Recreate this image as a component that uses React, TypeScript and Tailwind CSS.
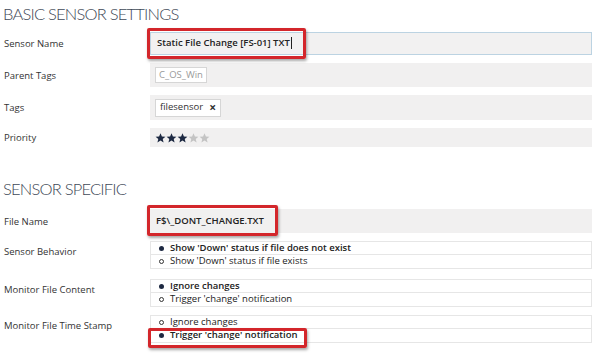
import React from "react";

const font = { fontFamily: '"Open Sans", "Liberation Sans", sans-serif' };
const headFont = { fontFamily: 'Lato, "Open Sans", sans-serif' };

function Label({ children, top }: { children: React.ReactNode; top?: boolean }) {
    return (
        <div className={"w-[150px] shrink-0 pl-[4px] text-[9.5px] leading-[13px] text-[#333] " + (top ? "pt-[4px]" : "")}>
            {children}
        </div>
    );
}

function RedBox({ className }: { className: string }) {
    return (
        <div
            className={
                "pointer-events-none absolute border-[3px] border-[#d3262b] rounded-[2px] shadow-[1px_2px_3px_rgba(0,0,0,0.35)] " +
                className
            }
        />
    );
}

function Dot({ on }: { on: boolean }) {
    return on ? (
        <span className="inline-block w-[5px] h-[5px] rounded-full bg-[#1d2942] mr-[6px]" />
    ) : (
        <span className="inline-block w-[5px] h-[5px] rounded-full border border-[#333] mr-[6px]" />
    );
}

function Option({ on, text, last }: { on: boolean; text: string; last?: boolean }) {
    return (
        <div
            className={
                "h-[13px] flex items-center pl-[8px] text-[9.5px] text-[#222] " +
                (on ? "font-semibold " : "") +
                (last ? "" : "border-b border-[#e6e6e6]")
            }
        >
            <Dot on={on} />
            {text}
        </div>
    );
}

function Star({ on }: { on: boolean }) {
    return (
        <svg width="11" height="12" viewBox="0 0 24 24">
            <path
                d="M12 1.5l3.1 7.1 7.6.6-5.8 5 1.8 7.5L12 17.7l-6.7 4 1.8-7.5-5.8-5 7.6-.6z"
                fill={on ? "#1d2942" : "#c4c4c4"}
            />
        </svg>
    );
}

export default function App() {
    return (
        <div className="w-[600px] h-[353px] bg-white overflow-hidden pr-[8px]" style={font}>
            <div
                className="h-[30px] pl-[3px] pt-[3px] text-[16.5px] font-light leading-[22px] text-[#3f4a58] tracking-[-0.8px]"
                style={headFont}
            >
                BASIC SENSOR SETTINGS
            </div>

            <div className="flex items-center h-[24px] mt-[1px]">
                <Label>Sensor Name</Label>
                <div className="relative flex-1 h-[23px] bg-[#f2f1f1] border border-[#bcd3e2] flex items-center pl-[6px] text-[9.5px] font-semibold text-[#222]">
                    Static File Change [FS-01] TXT<span className="w-px h-[12px] bg-[#222] ml-[1px]" />
                    <RedBox className="-left-[4px] -top-[5px] w-[159px] h-[31px]" />
                </div>
            </div>

            <div className="flex items-center h-[24px] mt-[8px]">
                <Label>Parent Tags</Label>
                <div className="flex-1 h-[24px] bg-[#f1f0f0] flex items-center pl-[5px]">
                    <span className="h-[16px] px-[3px] flex items-center bg-white border border-[#d6d6d6] text-[9.5px] text-[#9a9a9a]">
                        C_OS_Win
                    </span>
                </div>
            </div>

            <div className="flex items-center h-[25px] mt-[8px]">
                <Label>Tags</Label>
                <div className="flex-1 h-[25px] bg-[#f1f0f0] flex items-center pl-[5px]">
                    <span className="h-[18px] px-[4px] flex items-center bg-white border border-[#d6d6d6] text-[9.5px] text-[#333]">
                        filesensor
                        <span className="ml-[6px] text-[12px] font-bold text-[#333] leading-none">×</span>
                    </span>
                </div>
            </div>

            <div className="flex items-center h-[19px] mt-[8px]">
                <Label>Priority</Label>
                <div className="flex-1 h-[19px] bg-[#f1f0f0] flex items-center pl-[5px]">
                    <Star on />
                    <Star on />
                    <Star on />
                    <Star on={false} />
                    <Star on={false} />
                </div>
            </div>

            <div
                className="h-[62px] pl-[3px] pt-[31px] text-[16.5px] font-light leading-[22px] text-[#3f4a58] tracking-[-0.8px]"
                style={headFont}
            >
                SENSOR SPECIFIC
            </div>

            <div className="flex items-center h-[24px]">
                <Label>File Name</Label>
                <div className="relative flex-1 h-[24px] bg-[#f1f0f0] flex items-center pl-[6px] text-[9.5px] font-semibold text-[#222]">
                    F$\_DONT_CHANGE.TXT
                    <RedBox className="-left-[3px] -top-[4px] w-[131px] h-[31px]" />
                </div>
            </div>

            <div className="flex items-start mt-[8px]">
                <Label top>Sensor Behavior</Label>
                <div className="flex-1 border border-[#e6e6e6]">
                    <Option on text="Show 'Down' status if file does not exist" />
                    <Option on={false} text="Show 'Down' status if file exists" last />
                </div>
            </div>

            <div className="flex items-start mt-[10px]">
                <Label top>Monitor File Content</Label>
                <div className="flex-1 border border-[#e6e6e6]">
                    <Option on text="Ignore changes" />
                    <Option on={false} text="Trigger 'change' notification" last />
                </div>
            </div>

            <div className="flex items-start mt-[8px]">
                <Label top>Monitor File Time Stamp</Label>
                <div className="relative flex-1 border border-[#e6e6e6]">
                    <Option on={false} text="Ignore changes" />
                    <Option on text="Trigger 'change' notification" last />
                    <RedBox className="-left-[3px] top-[12px] w-[159px] h-[20px]" />
                </div>
            </div>
        </div>
    );
}
